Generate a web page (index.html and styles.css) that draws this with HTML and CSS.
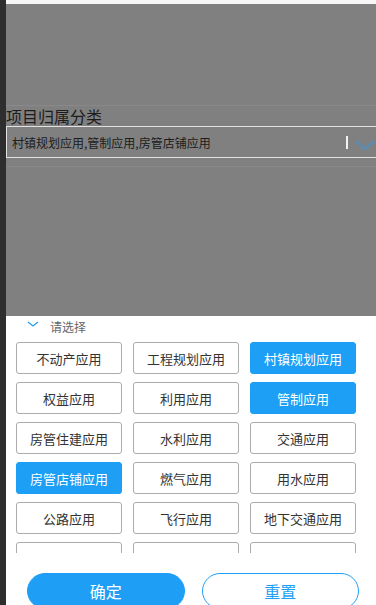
FILE: index.html
```html
<!DOCTYPE html>
<html lang="zh-CN">
<head>
  <meta charset="UTF-8" />
  <meta name="viewport" content="width=device-width, initial-scale=1.0"/>
  <title>项目归属分类</title>
  <link rel="stylesheet" href="styles.css">
</head>
<body>

<div class="app">
  <div class="edge"></div>

  <div class="screen">
    <div class="topbar"></div>

    <!-- form under the mask -->
    <div class="mask">
      <div class="field">
        <div class="field-label">项目归属分类</div>
        <div class="field-input">
          <span class="field-value">村镇规划应用,管制应用,房管店铺应用</span>
          <span class="caret-bar"></span>
          <svg class="field-arrow" width="22" height="12" viewBox="0 0 22 12">
            <path d="M2 2 L11 10 L20 2" fill="none" stroke="#5b8cb3" stroke-width="2.5"/>
          </svg>
        </div>
      </div>
    </div>

    <!-- picker sheet -->
    <div class="sheet">
      <div class="sheet-head">
        <svg width="12" height="6" viewBox="0 0 12 6">
          <path d="M1 1 L6 5 L11 1" fill="none" stroke="#1e9ff5" stroke-width="1.2"/>
        </svg>
        <span>请选择</span>
      </div>

      <div class="options">
        <div class="options-grid">
          <div class="opt">不动产应用</div>
          <div class="opt">工程规划应用</div>
          <div class="opt active">村镇规划应用</div>
          <div class="opt">权益应用</div>
          <div class="opt">利用应用</div>
          <div class="opt active">管制应用</div>
          <div class="opt">房管住建应用</div>
          <div class="opt">水利应用</div>
          <div class="opt">交通应用</div>
          <div class="opt active">房管店铺应用</div>
          <div class="opt">燃气应用</div>
          <div class="opt">用水应用</div>
          <div class="opt">公路应用</div>
          <div class="opt">飞行应用</div>
          <div class="opt">地下交通应用</div>
          <!-- next row is scrolled under the fold -->
          <div class="opt"></div>
          <div class="opt"></div>
          <div class="opt"></div>
        </div>
      </div>

      <div class="actions">
        <button class="btn btn-primary">确定</button>
        <button class="btn btn-ghost">重置</button>
      </div>
    </div>
  </div>
</div>

</body>
</html>
```

FILE: styles.css
```css
html, body {
  margin: 0;
  padding: 0;
  height: 605px;
  overflow: hidden;
}
body {
  font-family: "Noto Sans CJK SC", "Noto Sans", sans-serif;
  background: #fff;
}
.app {
  display: flex;
  height: 605px;
}
.edge {
  width: 6px;
  background: #2e2e2e;
  flex-shrink: 0;
}
.screen {
  flex: 1;
  display: flex;
  flex-direction: column;
  min-width: 0;
}
.topbar {
  height: 4px;
  flex-shrink: 0;
  background: #f7f7f7;
}
.mask {
  height: 312px;
  flex-shrink: 0;
  background: #808080;
  padding-top: 101px;
  box-sizing: border-box;
}
.field {
  border-top: 1px solid #898989;
  border-bottom: 1px solid #898989;
  padding-bottom: 8px;
}
.field-label {
  height: 20px;
  line-height: 20px;
  font-size: 16px;
  color: #1c1c1c;
}
.field-input {
  height: 32px;
  box-sizing: border-box;
  border: 1px solid #e2e2e2;
  border-right: none;
  display: flex;
  align-items: center;
  padding-left: 5px;
}
.field-value {
  flex: 1;
  font-size: 12px;
  color: #1c1c1c;
}
.caret-bar {
  width: 2px;
  height: 13px;
  background: #f2f2f2;
  margin-right: 6px;
}
.field-arrow {
  margin-top: 6px;
}
.sheet {
  flex: 1;
  min-height: 0;
  background: #fff;
  display: flex;
  flex-direction: column;
}
.sheet-head {
  height: 20px;
  flex-shrink: 0;
  display: flex;
  align-items: center;
  padding-left: 21px;
  gap: 11px;
  font-size: 12px;
  color: #666;
}
.sheet-head svg {
  margin-top: -5px;
}
.options {
  margin-top: 6px;
  height: 211px;
  flex-shrink: 0;
  overflow: hidden;
  padding-left: 10px;
}
.options-grid {
  display: grid;
  grid-template-columns: repeat(3, 106px);
  grid-auto-rows: 32px;
  gap: 8px 11px;
}
.opt {
  border: 1px solid #ababab;
  border-radius: 3px;
  display: flex;
  align-items: center;
  justify-content: center;
  font-size: 13px;
  color: #333;
  background: #fff;
}
.opt.active {
  background: #1c9ff5;
  border-color: #1c9ff5;
  color: #fff;
}
.actions {
  margin-top: 20px;
  flex-shrink: 0;
  display: flex;
  gap: 17px;
  padding-left: 21px;
  padding-right: 17px;
}
.btn {
  flex: 1;
  height: 36px;
  border-radius: 18px;
  font-family: inherit;
  font-size: 16px;
  cursor: pointer;
}
.btn-primary {
  background: #1e9ff5;
  border: 1px solid #1e9ff5;
  color: #fff;
}
.btn-ghost {
  background: #fff;
  border: 1px solid #1e9ff5;
  color: #1e9ff5;
}
```
